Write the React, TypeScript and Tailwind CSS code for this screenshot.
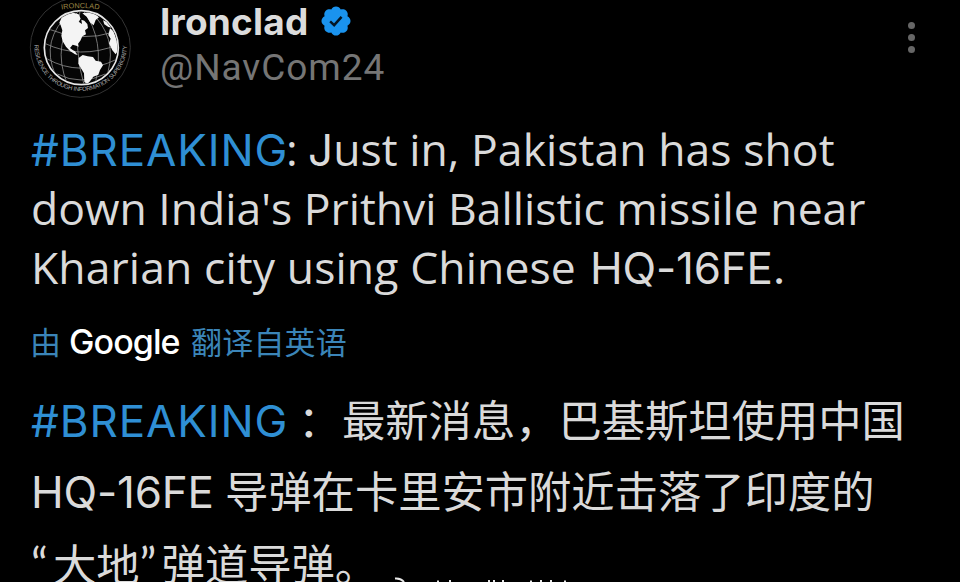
import React from 'react';
import { clsx } from 'clsx';

const LATIN = "font-['Open_Sans','Noto_Sans_CJK_SC',sans-serif]";
const CAPS = "font-['Inter',sans-serif]";
const CJK = "font-['Noto_Sans_CJK_SC',sans-serif]";

const GlobeLogo: React.FC = () => (
    <svg className="w-[120px] h-[105px] shrink-0" viewBox="0 0 360 315" fill="none">
        <defs>
            <path id="ring-top" d="M 100 34 Q 181 14 262 34" />
            <path id="ring-bottom" d="M 43 134 A 138 138 0 0 0 321 134" />
            <clipPath id="globe">
                <circle cx="184" cy="143" r="108" />
            </clipPath>
        </defs>
        <circle cx="181" cy="142" r="150" stroke="#3d3d3d" strokeWidth="2.5" />
        <circle cx="184" cy="143" r="111" fill="#050505" stroke="#e6e6e6" strokeWidth="5" />
        <g clipPath="url(#globe)">
            <g stroke="#8b8b8b" strokeWidth="2.5">
                <path d="M88 88 Q184 128 282 96 M74 130 Q180 180 294 134 M80 176 Q180 232 290 178 M112 222 Q182 258 256 222" />
                <path d="M176 32 Q92 130 142 252 M180 32 Q160 150 192 254 M190 32 Q256 120 226 250 M150 38 Q60 120 106 224 M212 36 Q292 110 264 216" />
            </g>
            <g fill="#f4f4f4">
                <path d="M118 68 L126 50 L140 42 L160 38 L176 43 L182 56 L176 65 L186 72 L184 59 L193 62 L202 72 L204 84 L195 91 L198 103 L187 109 L181 122 L174 131 L176 140 L169 137 L158 134 L150 144 L159 151 L164 153 L173 165 L165 163 L150 153 L138 140 L128 124 L124 107 L127 91 L122 76 Z" />
                <path d="M187 40 L207 36 L226 42 L237 52 L227 60 L221 76 L211 68 L200 50 Z" />
                <path d="M176 174 L188 165 L203 169 L219 171 L227 182 L243 185 L249 196 L240 210 L235 224 L220 230 L210 244 L202 252 L193 246 L192 220 L183 205 L175 191 Z" />
                <path d="M270 85 L281 94 L291 120 L296 150 L287 163 L277 151 L267 130 L272 116 L265 105 Z" />
                <path d="M249 61 L260 65 L275 83 L265 81 L253 73 Z" />
            </g>
        </g>
        <text className="font-['Liberation_Sans',sans-serif]" fontSize="22" fill="#9c8745">
            <textPath href="#ring-top" startOffset="50%" textAnchor="middle">IRONCLAD</textPath>
        </text>
        <text className="font-['Liberation_Sans',sans-serif]" fontSize="18" fill="#adadad">
            <textPath href="#ring-bottom" startOffset="0" textLength="434">RESILIENCE THROUGH INFORMATION SUPERIORITY</textPath>
        </text>
    </svg>
);

const VerifiedBadge: React.FC = () => (
    <svg className="w-[34px] h-[34px]" viewBox="0 0 22 22">
        <path
            fill="#1a93ee"
            d="M20.396 11c-.018-.646-.215-1.275-.57-1.816-.354-.54-.852-.972-1.438-1.246.223-.607.27-1.264.14-1.897-.131-.634-.437-1.218-.882-1.687-.47-.445-1.053-.75-1.687-.882-.633-.13-1.29-.083-1.897.14-.273-.587-.704-1.086-1.245-1.44S11.647 1.62 11 1.604c-.646.017-1.273.213-1.813.568s-.969.854-1.24 1.44c-.608-.223-1.267-.272-1.902-.14-.635.13-1.22.436-1.69.882-.445.47-.749 1.055-.878 1.688-.13.633-.08 1.29.144 1.896-.587.274-1.087.705-1.443 1.245-.356.54-.555 1.17-.574 1.817.02.647.218 1.276.574 1.817.356.54.856.972 1.443 1.245-.224.606-.274 1.263-.144 1.896.13.634.433 1.218.877 1.688.47.443 1.054.747 1.687.878.633.132 1.29.084 1.897-.136.274.586.705 1.084 1.246 1.439.54.354 1.17.551 1.816.569.647-.016 1.276-.213 1.817-.567s.972-.854 1.245-1.44c.604.239 1.266.296 1.903.164.636-.132 1.22-.447 1.68-.907.46-.46.776-1.044.908-1.681s.075-1.299-.165-1.903c.586-.274 1.084-.705 1.439-1.246.354-.54.551-1.17.569-1.816z"
        />
        <path d="M7.2 11.3 L9.8 13.7 L14.6 8.3" fill="none" stroke="#041523" strokeWidth="1.6" />
    </svg>
);

const Line: React.FC<{ className?: string; children: React.ReactNode }> = ({ className, children }) => (
    <div className={clsx('flex items-baseline whitespace-pre', className)}>{children}</div>
);

const Header: React.FC = () => (
    <header className="flex h-[105px] pl-5">
        <GlobeLogo />
        <div className="ml-5 flex-1">
            <div className="flex items-center h-[44px]">
                <span className="text-[37px] leading-[44px] font-bold tracking-[0.2px] text-[#dcdcdc] font-['Inter',sans-serif]">Ironclad</span>
                <span className="ml-[11px] -mt-[2px]"><VerifiedBadge /></span>
            </div>
            <div className="text-[37px] leading-[48px] tracking-[0.95px] text-[#757575] font-['Roboto',sans-serif]">@NavCom24</div>
        </div>
        <div className="mt-[22px] mr-[45px] flex flex-col gap-[5px]">
            <span className="size-[7px] rounded-full bg-[#666]" />
            <span className="size-[7px] rounded-full bg-[#666]" />
            <span className="size-[7px] rounded-full bg-[#666]" />
        </div>
    </header>
);

// Tops of the next caption, cut by the lower edge
const CaptionEdge: React.FC = () => (
    <svg className="absolute left-[390px] bottom-0 w-[190px] h-[5px]" viewBox="0 0 190 5" fill="none" stroke="#e8e8e8">
        <path d="M5 1.5 Q11 1 14 5" strokeWidth="2" />
        <path d="M48 3.5v2 M60 3v2 M99 3v2 M104 3v2 M113 3v2 M141 3.5v2 M151 3v2 M161 3v2 M175 3.5v2" strokeWidth="2" />
    </svg>
);

const App: React.FC = () => (
    <main className={clsx('relative w-[960px] h-[582px] overflow-hidden bg-black text-[#dadada]', LATIN)}>
        <Header />
        <section className="pl-[31px] pt-[14px] text-[44.5px] leading-[59px]">
            <Line className="h-[59px]">
                <span className={clsx('w-[255px] text-[44px] tracking-[0.9px] text-[#2f8fd4]', CAPS)}>#BREAKING</span>
                <span className="w-[22px]">: </span>
                <span className={clsx('text-[44px]', CAPS)}>J</span>
                <span className="tracking-[0.05px]">ust in, Pakistan has shot</span>
            </Line>
            <Line className="h-[59px]">down India's Prithvi Ballistic missile near</Line>
            <Line className="h-[59px]">
                <span className="w-[559px] tracking-[0.1px]">Kharian city using Chinese </span>
                <span className={clsx('text-[44px] tracking-[-0.2px]', CAPS)}>HQ-16FE.</span>
            </Line>
        </section>
        <section className={clsx('pl-[30px] mt-[20px] h-[50px]', CJK)}>
            <Line className="text-[31px] leading-[50px] text-[#3b85b8]">
                <span className="w-[39px]">由</span>
                <span className="w-[122px] font-['Inter',sans-serif] font-medium text-[34px] tracking-[-0.9px] text-white">Google</span>
                <span className="tracking-[0.2px]">翻译自英语</span>
            </Line>
        </section>
        <section className="pl-[31px] mt-[17px] text-[43.3px] leading-[71px]">
            <Line className="h-[71px]">
                <span className={clsx('w-[267px] text-[44px] tracking-[0.9px] text-[#2f8fd4]', CAPS)}>#BREAKING</span>
                <span className={clsx('w-[44px]', CJK)}>：</span>
                <span className={CJK}>最新消息，巴基斯坦使用中国</span>
            </Line>
            <Line className="h-[71px]">
                <span className={clsx('w-[194px] text-[44px] tracking-[-0.2px]', CAPS)}>HQ-16FE</span>
                <span className={CJK}>导弹在卡里安市附近击落了印度的</span>
            </Line>
            <Line className="h-[71px] pt-[2px]">
                <span className="w-[22px] font-['Lato',sans-serif] text-[46px]">“</span>
                <span className={CJK}>大地</span>
                <span className="w-[22px] font-['Lato',sans-serif] text-[46px]">”</span>
                <span className={CJK}>弹道导弹。</span>
            </Line>
        </section>
        <CaptionEdge />
    </main>
);

export default App;
